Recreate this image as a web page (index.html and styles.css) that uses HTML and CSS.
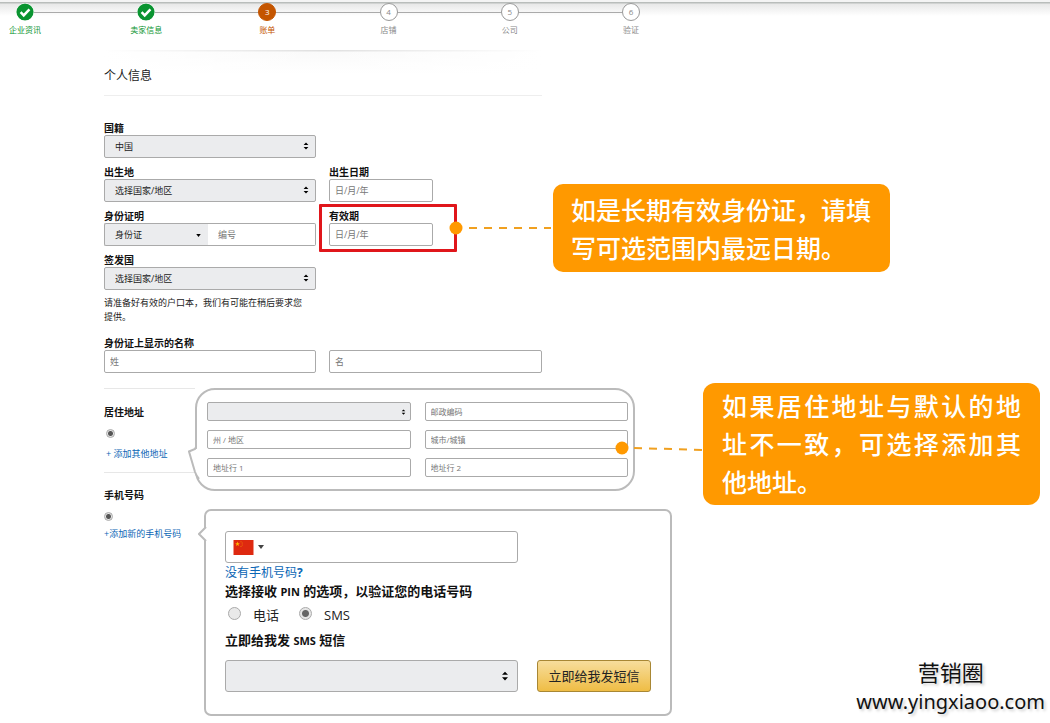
FILE: index.html
```html
<!DOCTYPE html>
<html lang="zh-CN">
<head>
<meta charset="utf-8">
<meta name="viewport" content="width=device-width, initial-scale=1">
<title>个人信息</title>
<link rel="stylesheet" href="styles.css">
</head>
<body>
<svg class="defs" width="0" height="0" aria-hidden="true">
  <symbol id="updown" viewBox="0 0 6 8"><path d="M3 0.5 5.4 3H0.6zM3 7.5 0.6 5h4.800z"/></symbol>
  <symbol id="down" viewBox="0 0 6 4"><path d="M0 0h6L3 4z"/></symbol>
  <symbol id="tick" viewBox="0 0 18 18"><circle cx="9" cy="9" r="8.6" fill="#0a9431"/><path d="M4.6 9.2l3.1 3.2 5.7-6" fill="none" stroke="#fff" stroke-width="2.5"/></symbol>
</svg>
<header class="top">
  <ol class="steps">
    <li class="step done"><svg class="dot"><use href="#tick"/></svg><span>企业资讯</span></li>
    <li class="step done"><svg class="dot"><use href="#tick"/></svg><span>卖家信息</span></li>
    <li class="step current"><b class="dot">3</b><span>账单</span></li>
    <li class="step"><b class="dot">4</b><span>店铺</span></li>
    <li class="step"><b class="dot">5</b><span>公司</span></li>
    <li class="step"><b class="dot">6</b><span>验证</span></li>
  </ol>
</header>
<main class="page">
  <h1 class="title">个人信息</h1>
  <div class="row">
    <section class="fields">
      <div class="field">
        <label for="nation">国籍</label>
        <div class="select"><select id="nation"><option>中国</option></select><svg><use href="#updown"/></svg></div>
      </div>
      <div class="field first">
        <label for="birthplace">出生地</label>
        <div class="select"><select id="birthplace"><option>选择国家/地区</option></select><svg><use href="#updown"/></svg></div>
      </div>
      <div class="field date">
        <label for="birthday">出生日期</label>
        <input id="birthday" type="text" placeholder="日/月/年">
      </div>
      <div class="field first">
        <label for="idtype">身份证明</label>
        <div class="pair">
          <div class="select"><select id="idtype"><option>身份证</option></select><svg class="small"><use href="#down"/></svg></div>
          <input type="text" placeholder="编号" aria-label="编号">
        </div>
      </div>
      <div class="field date marked">
        <label for="expiry">有效期</label>
        <input id="expiry" type="text" placeholder="日/月/年">
      </div>
      <div class="field first">
        <label for="issuer">签发国</label>
        <div class="select"><select id="issuer"><option>选择国家/地区</option></select><svg><use href="#updown"/></svg></div>
      </div>
    </section>
    <aside class="callout date-tip">
      <svg class="link" viewBox="0 0 104 14"><circle cx="7" cy="7" r="6.5"/><path d="M20 7h82"/></svg>
      如是长期有效身份证，请填写可选范围内最远日期。
    </aside>
  </div>
  <p class="note">请准备好有效的户口本，我们有可能在稍后要求您提供。</p>
  <section class="names">
    <div class="field">
      <label for="surname">身份证上显示的名称</label>
      <input id="surname" type="text" placeholder="姓">
    </div>
    <input type="text" placeholder="名" aria-label="名">
  </section>
  <div class="row">
    <div class="options">
      <section class="option">
        <h2>居住地址</h2>
        <input class="radio inset" type="radio" name="address" aria-label="居住地址" checked>
        <a class="inset" href="#address">+ 添加其他地址</a>
      </section>
      <section class="option">
        <h2>手机号码</h2>
        <input class="radio" type="radio" name="mobile" aria-label="手机号码" checked>
        <a href="#phone">+添加新的手机号码</a>
      </section>
    </div>
    <div class="bubbles">
      <section class="bubble address" id="address">
        <svg class="tail" viewBox="0 0 14 34"><path class="gap" d="M8 3v24L12 31V3z"/><path d="M8 1L7 3 1 5.5 7 26Q8.500 30 11 33"/></svg>
        <div class="select"><select aria-label="国家/地区"></select><svg><use href="#updown"/></svg></div>
        <input type="text" placeholder="邮政编码" aria-label="邮政编码">
        <input type="text" placeholder="州 / 地区" aria-label="州 / 地区">
        <input type="text" placeholder="城市/城镇" aria-label="城市/城镇">
        <input type="text" placeholder="地址行 1" aria-label="地址行 1">
        <input type="text" placeholder="地址行 2" aria-label="地址行 2">
      </section>
      <section class="bubble phone" id="phone">
        <svg class="tail" viewBox="0 0 10 16"><path class="gap" d="M7 1h3v14H7z"/><path d="M8 1L1 8l7 7"/></svg>
        <div class="tel">
          <svg class="flag" viewBox="0 0 20 15"><path fill="#de2910" d="M0 0h20v15H0z"/><path fill="#ffb400" d="M4 1.500l.6 1.700h1.800L5 4.300l.5 1.700L4 5 2.500 6 3 4.300 1.600 3.200h1.800z"/><g fill="#f58a00"><circle cx="7.500" cy="1.700" r=".5"/><circle cx="8.700" cy="3" r=".5"/><circle cx="8.700" cy="5" r=".5"/><circle cx="7.500" cy="6.500" r=".5"/></g></svg>
          <svg class="caret"><use href="#down"/></svg>
          <input type="tel" aria-label="手机号码">
        </div>
        <a href="#help">没有手机号码<b>?</b></a>
        <h3>选择接收 <span>PIN</span> 的选项，以验证您的电话号码</h3>
        <div class="choices">
          <label><input class="radio" type="radio" name="pin">电话</label>
          <label><input class="radio" type="radio" name="pin" checked>SMS</label>
        </div>
        <h3>立即给我发 <span>SMS</span> 短信</h3>
        <div class="send">
          <div class="select"><select aria-label="短信语言"></select><svg><use href="#updown"/></svg></div>
          <button type="button">立即给我发短信</button>
        </div>
      </section>
    </div>
    <aside class="callout address-tip">
      <svg class="link" viewBox="0 0 88 14"><circle cx="7" cy="6" r="6.500"/><path d="M19 6l69 2"/></svg>
      如果居住地址与默认的地址不一致，可选择添加其他地址。
    </aside>
  </div>
</main>
<footer class="mark"><span>营销圈</span><span class="site">www.yingxiaoo.com</span></footer>
</body>
</html>
```
FILE: styles.css
```css
* { box-sizing: border-box; }
body {
  margin: 0;
  position: relative;
  min-height: 100vh;
  background: #fff;
  color: #222;
  font-family: "Open Sans", "Noto Sans CJK SC", sans-serif;
  font-size: 9px;
  line-height: 14px;
}
h1, h2, h3, p, ol { margin: 0; padding: 0; }
input, select, button { font: inherit; color: inherit; margin: 0; }
a { color: #0a66b5; text-decoration: none; white-space: nowrap; }
.defs { position: absolute; }

.top {
  height: 50px;
  padding: 1px 0 0 9px;
  border-top: 2px solid #f4f4f4;
  background: linear-gradient(#b9bdbb 0 1px, #e8e8e8 2px, #fff 14px);
}
.steps {
  position: relative;
  display: flex;
  justify-content: space-between;
  max-width: 638px;
  list-style: none;
}
.steps::before {
  content: "";
  position: absolute;
  top: 9px;
  left: 16px;
  right: 16px;
  height: 1px;
  background: #aaa;
}
.step {
  position: relative;
  display: flex;
  flex-direction: column;
  align-items: center;
  gap: 2px;
  width: 32px;
  color: #888;
  font-size: 8px;
  white-space: nowrap;
}
.dot {
  width: 18px;
  height: 18px;
  border: 1px solid #999;
  border-radius: 50%;
  background: #fff;
  font-weight: 400;
  line-height: 16px;
  text-align: center;
}
svg.dot { border: 0; }
.done { color: #0a9431; }
.current { color: #c45500; }
.current .dot { background: #c45500; border-color: #c45500; color: #fff; }

.page { padding-left: 104px; }
.title {
  width: 438px;
  height: 46px;
  margin-bottom: 25px;
  padding-top: 17px;
  border-bottom: 1px solid #eee;
  background: linear-gradient(90deg, #fff, transparent 50%, #fff), linear-gradient(#e0e0e0 0 1px, #fafafa 2px, #fff 24px);
  font-size: 12px;
  font-weight: 400;
  line-height: 18px;
}
.row { display: flex; align-items: flex-start; }

.fields, .names {
  display: grid;
  grid-template-columns: 212px 213px;
  column-gap: 13px;
}
.fields { grid-template-columns: 212px 104px; row-gap: 7px; padding-right: 24px; }
.first { grid-column: 1; }
.field label { display: block; height: 14px; color: #111; font-size: 10px; font-weight: 700; line-height: 14px; }
.field .select, .field input, .names > input { height: 23px; }
input[type="text"], .tel, select {
  width: 100%;
  padding: 0 5px;
  border: 1px solid #aaa;
  border-radius: 2px;
  background: #fff;
}
input::placeholder { color: #777; opacity: 1; }
.names { align-items: end; margin-bottom: 10px; }
.select { position: relative; }
.select select {
  height: 100%;
  padding: 0 10px;
  background: #ebecee;
  appearance: none;
}
.select svg { position: absolute; top: 50%; right: 7px; width: 6px; height: 8px; margin-top: -5px; }
.select .small { width: 5px; height: 3px; margin-top: -1px; }
.pair { display: grid; grid-template-columns: 104px 1fr; }
.pair select { border-right: 0; border-radius: 2px 0 0 2px; }
.pair input { border-left: 0; border-radius: 0 2px 2px 0; padding-left: 10px; }
.marked { position: relative; }
.marked::after {
  content: "";
  position: absolute;
  inset: -5px -24px -6px -10px;
  border: 3px solid #e0161b;
  border-radius: 1px;
  pointer-events: none;
}
.note { width: 206px; margin: 6px 0 12px; }

.callout {
  position: relative;
  border-radius: 10px;
  background: #ff9900;
  color: #fff;
  font-size: 25px;
  font-weight: 500;
  line-height: 38px;
}
.date-tip { width: 337px; margin: 63px 0 0 96px; padding: 7px 18px 5px; }
.address-tip { width: 337px; flex: none; margin-left: 31px; padding: 4px 19px; border-radius: 12px; text-align: justify; }
.link { position: absolute; right: 100%; height: 14px; fill: #ff9900; overflow: visible; }
.link path { stroke: #f0a020; stroke-width: 2; stroke-dasharray: 8 7; }
.date-tip .link { top: 37px; width: 104px; }
.address-tip .link { top: 59px; width: 88px; }

.options { width: 91px; margin-top: 5px; }
.option {
  display: flex;
  flex-direction: column;
  align-items: flex-start;
  height: 84px;
  padding-top: 16px;
  border-top: 1px solid #e7e7e7;
}
.option h2 { margin-bottom: 10px; color: #111; font-size: 10px; font-weight: 700; }
.option + .option { padding-top: 15px; }
.option a { margin-top: 9px; }
.option + .option a { margin-top: 6px; }
.option .inset { margin-left: 2px; }
.radio {
  width: 9px;
  height: 9px;
  border: 1px solid #aaa;
  border-radius: 50%;
  background: #e9e9e9;
  appearance: none;
}
.radio:checked { background: radial-gradient(circle, #555 0 2px, #e5e5e5 3px); }

.bubbles { flex: none; width: 477px; margin-top: 5px; }
.bubble { position: relative; border: 2px solid #bbb; background: #fff; }
.tail { position: absolute; fill: #fff; stroke: #bbb; stroke-width: 2; }
.tail .gap { stroke: none; }
.address {
  display: grid;
  grid-template-columns: 1fr 1fr;
  grid-auto-rows: 19px;
  gap: 9px 14px;
  width: 440px;
  height: 103px;
  padding: 12px 5px 12px 10px;
  border-radius: 20px;
  font-size: 8px;
}
.address .tail { left: -9px; top: 56px; width: 14px; height: 34px; }
.address .select svg { width: 5px; height: 6px; margin-top: -3px; right: 5px; }
.phone {
  display: flex;
  flex-direction: column;
  align-items: flex-start;
  margin: 18px 0 0 9px;
  padding: 20px 19px 22px;
  border-radius: 7px;
  font-size: 12px;
}
.phone .tail { left: -8px; top: 15px; width: 10px; height: 16px; }
.tel { display: flex; align-items: center; gap: 4px; width: 293px; height: 32px; padding-left: 7px; border-radius: 3px; }
.tel input { flex: 1; min-width: 0; border: 0; outline: 0; }
.flag { width: 21px; height: 15px; }
.caret { width: 6px; height: 4px; fill: #444; }
.phone a { line-height: 20px; }
.phone h3 { color: #111; font-size: 13px; line-height: 16px; }
.phone h3 span { font-size: 11px; font-weight: 700; }
.choices { display: flex; gap: 20px; padding: 5px 0 7px 3px; font-size: 13px; line-height: 20px; }
.choices label { display: flex; align-items: flex-start; gap: 12px; }
.choices .radio { width: 13px; height: 13px; margin-top: 2px; }
.choices .radio:checked { background: radial-gradient(circle, #666 0 3px, #e5e5e5 4px); }
.send { display: flex; gap: 19px; margin-top: 11px; }
.send .select { width: 293px; height: 32px; }
.send select { border-radius: 3px; }
.send .select svg { width: 8px; height: 10px; margin-top: -5px; right: 9px; }
.send button {
  width: 114px;
  height: 32px;
  padding: 0;
  border: 1px solid #a88734;
  border-radius: 3px;
  background: linear-gradient(#f7dd9c, #efbd45);
  color: #222;
  font-size: 13px;
  white-space: nowrap;
}

.mark {
  position: absolute;
  right: 5px;
  bottom: 6px;
  display: flex;
  flex-direction: column;
  align-items: center;
  color: #111;
  font-family: "Noto Sans", "Noto Sans CJK SC", sans-serif;
  font-size: 22px;
  line-height: 30px;
  text-shadow: 2px 2px 3px #ccc;
}
.site { font-size: 20px; }
```
